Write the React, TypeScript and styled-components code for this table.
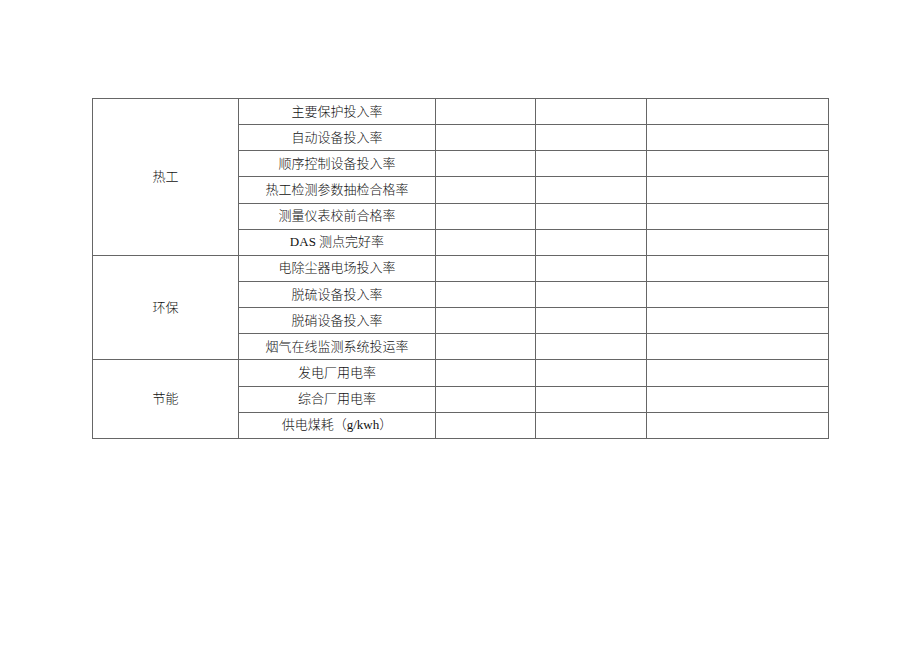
import styled, {createGlobalStyle} from 'styled-components'

const GlobalStyle = createGlobalStyle`
    html, body {
        margin: 0;
        padding: 0;
        background: #fff;
    }
    body {
        font-family: 'Liberation Serif', 'Noto Sans CJK SC', serif;
    }
`

const groups: {name: string; items: string[]}[] = [
    {
        name: '热工',
        items: [
            '主要保护投入率',
            '自动设备投入率',
            '顺序控制设备投入率',
            '热工检测参数抽检合格率',
            '测量仪表校前合格率',
            'DAS 测点完好率',
        ],
    },
    {
        name: '环保',
        items: ['电除尘器电场投入率', '脱硫设备投入率', '脱硝设备投入率', '烟气在线监测系统投运率'],
    },
    {
        name: '节能',
        items: ['发电厂用电率', '综合厂用电率', '供电煤耗（g/kwh）'],
    },
]

const colWidths = [146, 197, 100, 111, 182]

const Page = styled.div`
    width: 920px;
    height: 651px;
    padding: 98px 0 0 92px;
    box-sizing: border-box;
`

const Table = styled.table`
    border-collapse: collapse;
    table-layout: fixed;
    width: 736px;
    color: #111;
    font-size: 13px;
`

const Row = styled.tr`
    height: 26.15px;
`

const Cell = styled.td`
    border: 1px solid #666;
    padding: 0;
    text-align: center;
    vertical-align: middle;
    line-height: 16px;
    white-space: nowrap;
    font-weight: 300;
`

export default function App() {
    return (
        <Page>
            <GlobalStyle />
            <Table>
                <colgroup>
                    {colWidths.map((w, i) => (
                        <col key={i} style={{width: w}} />
                    ))}
                </colgroup>
                <tbody>
                    {groups.map((g) =>
                        g.items.map((item, i) => (
                            <Row key={g.name + item}>
                                {i === 0 && <Cell rowSpan={g.items.length}>{g.name}</Cell>}
                                <Cell>{item}</Cell>
                                <Cell />
                                <Cell />
                                <Cell />
                            </Row>
                        ))
                    )}
                </tbody>
            </Table>
        </Page>
    )
}
